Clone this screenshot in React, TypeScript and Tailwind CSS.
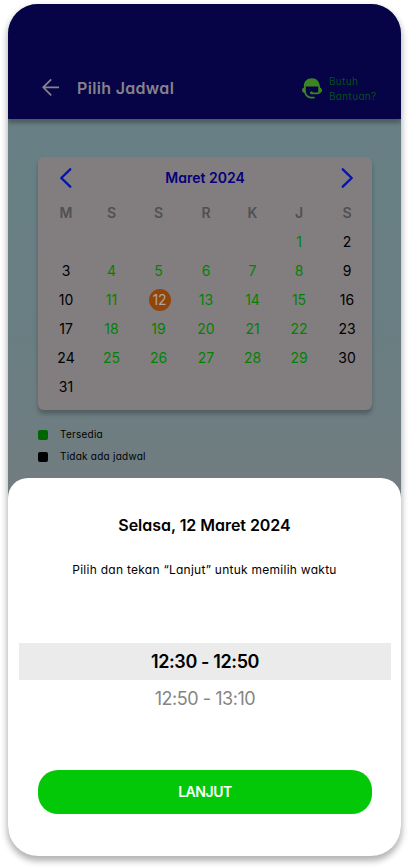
import React from "react";

type Day = { label: string; tone: "black" | "green" | "selected" | "none" };

const weekdays = ["M", "S", "S", "R", "K", "J", "S"];

const days: Day[] = Array.from({ length: 42 }, (_, i) => {
  const n = i - 4;
  if (n < 1 || n > 31) return { label: "", tone: "none" };
  if (n === 12) return { label: "12", tone: "selected" };
  const weekend = i % 7 === 0 || i % 7 === 6;
  return { label: String(n), tone: weekend ? "black" : "green" };
});

const tones = {
  black: "text-black",
  green: "text-[#038103]",
  selected: "text-[#b0a49c]",
  none: "",
};

const columns = "grid grid-cols-[46px_45px_49px_46px_47px_46px_50px] pl-[5px]";

function Header() {
  return (
    <header className="relative flex h-[115px] items-end bg-[#060347] pb-[15px] pl-[34px] shadow-[0_4px_4px_rgba(0,0,0,0.28)]">
      <svg className="mb-[8px] h-[18px] w-[18px] shrink-0" viewBox="0 0 18 18" fill="none" stroke="#85838b" strokeWidth="1.8">
        <path d="M17 9.3H1.2M9.2 1.3 1.2 9.3l8 8" />
      </svg>
      <h1 className="ml-[17px] h-[32px] w-[112px] whitespace-nowrap text-[16px] font-semibold leading-[32px] tracking-[0.32px] text-[#858389]">
        Pilih Jadwal
      </h1>
      <div className="ml-auto mr-[21px] flex items-center">
        <svg className="mb-[4px] h-[21px] w-[20px]" viewBox="0 0 20 21" fill="none">
          <path d="M1.8 8.4C1.8 3.4 5 .3 9.8.3s7.8 3.2 8 8.1Z" fill="#3d8522" />
          <path d="M3.4 9.3C1.2 9.4 0 10.6 0 12.2s1.2 2.7 3.4 2.8ZM16.6 9.3c2.3.1 3.4 1.3 3.4 3s-1.1 2.9-3 3.1Z" fill="#3d8522" />
          <path d="M2.8 8v4.6c0 4 3 6.9 6.4 7.1h3.4M17.2 8v5.8c0 1-.7 1.6-1.8 1.6H9.6" stroke="#3d8522" strokeWidth="1.7" />
          <circle cx="9.4" cy="14.8" r="1.4" fill="#3d8522" />
        </svg>
        <p className="ml-[7px] w-[51px] whitespace-nowrap text-[10px] leading-[15px] tracking-[0.33px] text-[#034f1b]">
          <span className="-mt-[2px] block">Butuh</span>
          <span className="block">Bantuan?</span>
        </p>
      </div>
    </header>
  );
}

function Calendar() {
  return (
    <section className="h-[253px] rounded-[6px] bg-[#827e80] shadow-[0_4px_4px_rgba(0,0,0,0.25)]">
      <div className="flex h-[41px] items-center justify-between pl-[22px] pr-[19px]">
        <svg className="h-[20px] w-[12px]" viewBox="0 0 12 20" fill="none" stroke="#0315b0" strokeWidth="2.4" strokeLinecap="round" strokeLinejoin="round">
          <path d="M10.2 1.3 1.3 10l8.9 8.7" />
        </svg>
        <h2 className="-ml-[3px] whitespace-nowrap text-[14px] font-semibold text-[#05007a]">Maret 2024</h2>
        <svg className="h-[20px] w-[12px]" viewBox="0 0 12 20" fill="none" stroke="#0315b0" strokeWidth="2.4" strokeLinecap="round" strokeLinejoin="round">
          <path d="m1.8 1.3 8.9 8.7-8.9 8.7" />
        </svg>
      </div>
      <div className={columns}>
        {weekdays.map((d, i) => (
          <span key={i} className="flex h-[29px] items-center justify-center text-[14px] font-semibold text-[#505052]">{d}</span>
        ))}
        {days.map((d, i) => (
          <span key={i} className={`flex h-[29px] items-center justify-center text-[14px] ${tones[d.tone]}`}>
            {d.tone === "selected" ? (
              <span className="ml-[3px] flex h-[22px] w-[22px] items-center justify-center rounded-full bg-[#91450a] pr-[1px]">{d.label}</span>
            ) : (
              d.label
            )}
          </span>
        ))}
      </div>
    </section>
  );
}

function Legend({ color, label }: { color: string; label: string }) {
  return (
    <div className="flex h-[22px] items-center">
      <span className={`h-[10px] w-[10px] rounded-[2px] ${color}`} />
      <span className="-mt-[1px] ml-[12px] whitespace-nowrap text-[10px] tracking-[0.24px] text-black">{label}</span>
    </div>
  );
}

function TimeSheet() {
  return (
    <section className="flex h-[378px] flex-col rounded-t-[20px] bg-white text-center">
      <h2 className="mt-[35px] h-[24px] text-[16px] font-semibold leading-[24px] tracking-[-0.04px] text-black">Selasa, 12 Maret 2024</h2>
      <p className="mt-[24px] h-[18px] whitespace-nowrap text-[12px] leading-[18px] tracking-[0.26px] text-black">
        Pilih dan tekan “Lanjut” untuk memilih waktu
      </p>
      <div className="ml-[11px] mr-[10px] mt-[64px]">
        <div className="h-[37px] bg-[#ebebeb] text-[18px] font-semibold leading-[37px] tracking-[-0.38px] text-black">12:30 - 12:50</div>
        <div className="h-[37px] text-[18px] leading-[37px] tracking-[-0.46px] text-[#858585]">12:50 - 13:10</div>
      </div>
      <button className="ml-[30px] mt-[53px] h-[44px] w-[334px] rounded-[20px] bg-[#03c808] pb-[2px] text-[14px] font-semibold tracking-[-0.45px] text-white">
        LANJUT
      </button>
    </section>
  );
}

export default function App() {
  return (
    <div className="h-[868px] w-[409px] overflow-hidden bg-white pl-[8px] pt-[4px] font-['Inter','Open_Sans',sans-serif] [font-feature-settings:'cv11']">
      <main className="h-[852px] w-[393px] overflow-hidden rounded-[30px] bg-linear-to-b from-[#678085] from-10% via-[#6a7e82] via-40% to-[#727c80] to-60% shadow-[0_4px_6px_1px_rgba(0,0,0,0.3)]">
        <Header />
        <div className="h-[359px] pl-[30px] pr-[29px] pt-[38px]">
          <Calendar />
          <div className="mt-[14px]">
            <Legend color="bg-[#006600]" label="Tersedia" />
            <Legend color="bg-black" label="Tidak ada jadwal" />
          </div>
        </div>
        <TimeSheet />
      </main>
    </div>
  );
}
